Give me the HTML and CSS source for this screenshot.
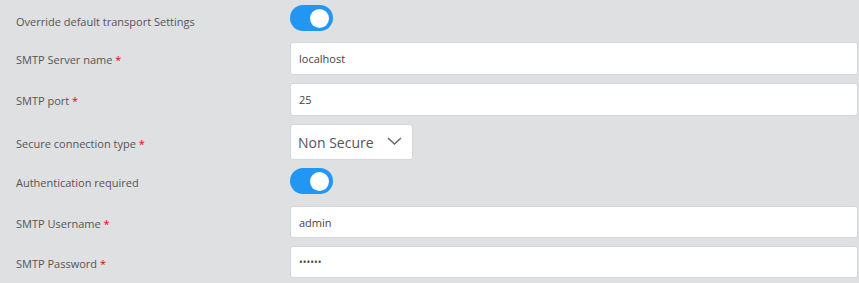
FILE: index.html
```html
<!DOCTYPE html>
<html lang="en">
<head>
    <meta charset="UTF-8">
    <meta name="viewport" content="width=device-width, initial-scale=1.0">
    <title>Transport Settings</title>
    <link rel="stylesheet" href="styles.css">
</head>
<body>
    <form class="settings">
        <div class="row row-toggle first">
            <label class="label">Override default transport Settings</label>
            <label class="switch"><input type="checkbox" checked><span class="slider"></span></label>
        </div>

        <div class="row">
            <label class="label" for="server">SMTP Server name <span class="req">*</span></label>
            <input class="field" type="text" id="server" value="localhost">
        </div>

        <div class="row">
            <label class="label" for="port">SMTP port <span class="req">*</span></label>
            <input class="field" type="text" id="port" value="25">
        </div>

        <div class="row row-select">
            <label class="label" for="secure">Secure connection type <span class="req">*</span></label>
            <div class="select">
                <span>Non Secure</span>
                <svg width="15" height="8" viewBox="0 0 15 8"><path d="M1 1l6.5 6 6.5-6" fill="none" stroke="#666" stroke-width="1.5"/></svg>
            </div>
        </div>

        <div class="row row-toggle">
            <label class="label">Authentication required</label>
            <label class="switch"><input type="checkbox" checked><span class="slider"></span></label>
        </div>

        <div class="row row-user">
            <label class="label" for="user">SMTP Username <span class="req">*</span></label>
            <input class="field short" type="text" id="user" value="admin">
        </div>

        <div class="row">
            <label class="label" for="pass">SMTP Password <span class="req">*</span></label>
            <input class="field short" type="password" id="pass" value="secret">
        </div>
    </form>
</body>
</html>
```

FILE: styles.css
```css
body {
    margin: 0;
    padding: 0;
    background-color: #dfe0e2;
    font-family: "Open Sans", "Noto Sans", Arial, sans-serif;
    color: #555;
}

.settings {
    padding: 5px 1px 0 16px;
}

.row {
    display: flex;
    align-items: center;
    margin-bottom: 8px;
}

.row.first {
    margin-bottom: 11px;
}

.row.first .label {
    padding-top: 7px;
}

.row-toggle {
    margin-bottom: 12px;
}

.label {
    width: 274px;
    flex-shrink: 0;
    font-size: 11px;
    color: #555;
    padding-top: 2px;
}

.req {
    color: #e00;
}

.field {
    flex: 1;
    height: 33px;
    box-sizing: border-box;
    border: 1px solid #d3d6da;
    border-radius: 3px;
    background: #fff;
    padding: 0 8px;
    font-family: inherit;
    font-size: 11px;
    color: #444;
    outline: none;
}

.field.short {
    height: 32px;
}

.field[type="password"] {
    font-size: 10px;
    letter-spacing: 0;
}

.select {
    width: 123px;
    height: 36px;
    box-sizing: border-box;
    border: 1px solid #d3d6da;
    border-radius: 3px;
    background: #fff;
    display: flex;
    align-items: center;
    justify-content: space-between;
    padding: 0 10px 0 7px;
    font-size: 14px;
    color: #555;
}

.select svg {
    margin-top: -2px;
}

.switch {
    position: relative;
    display: inline-block;
    width: 43px;
    height: 26px;
}

.switch input {
    display: none;
}

.slider {
    position: absolute;
    inset: 0;
    background: #2196f3;
    border-radius: 13px;
}

.slider::before {
    content: "";
    position: absolute;
    width: 19px;
    height: 19px;
    border-radius: 50%;
    background: #fff;
    top: 3.5px;
    right: 4px;
}
```
